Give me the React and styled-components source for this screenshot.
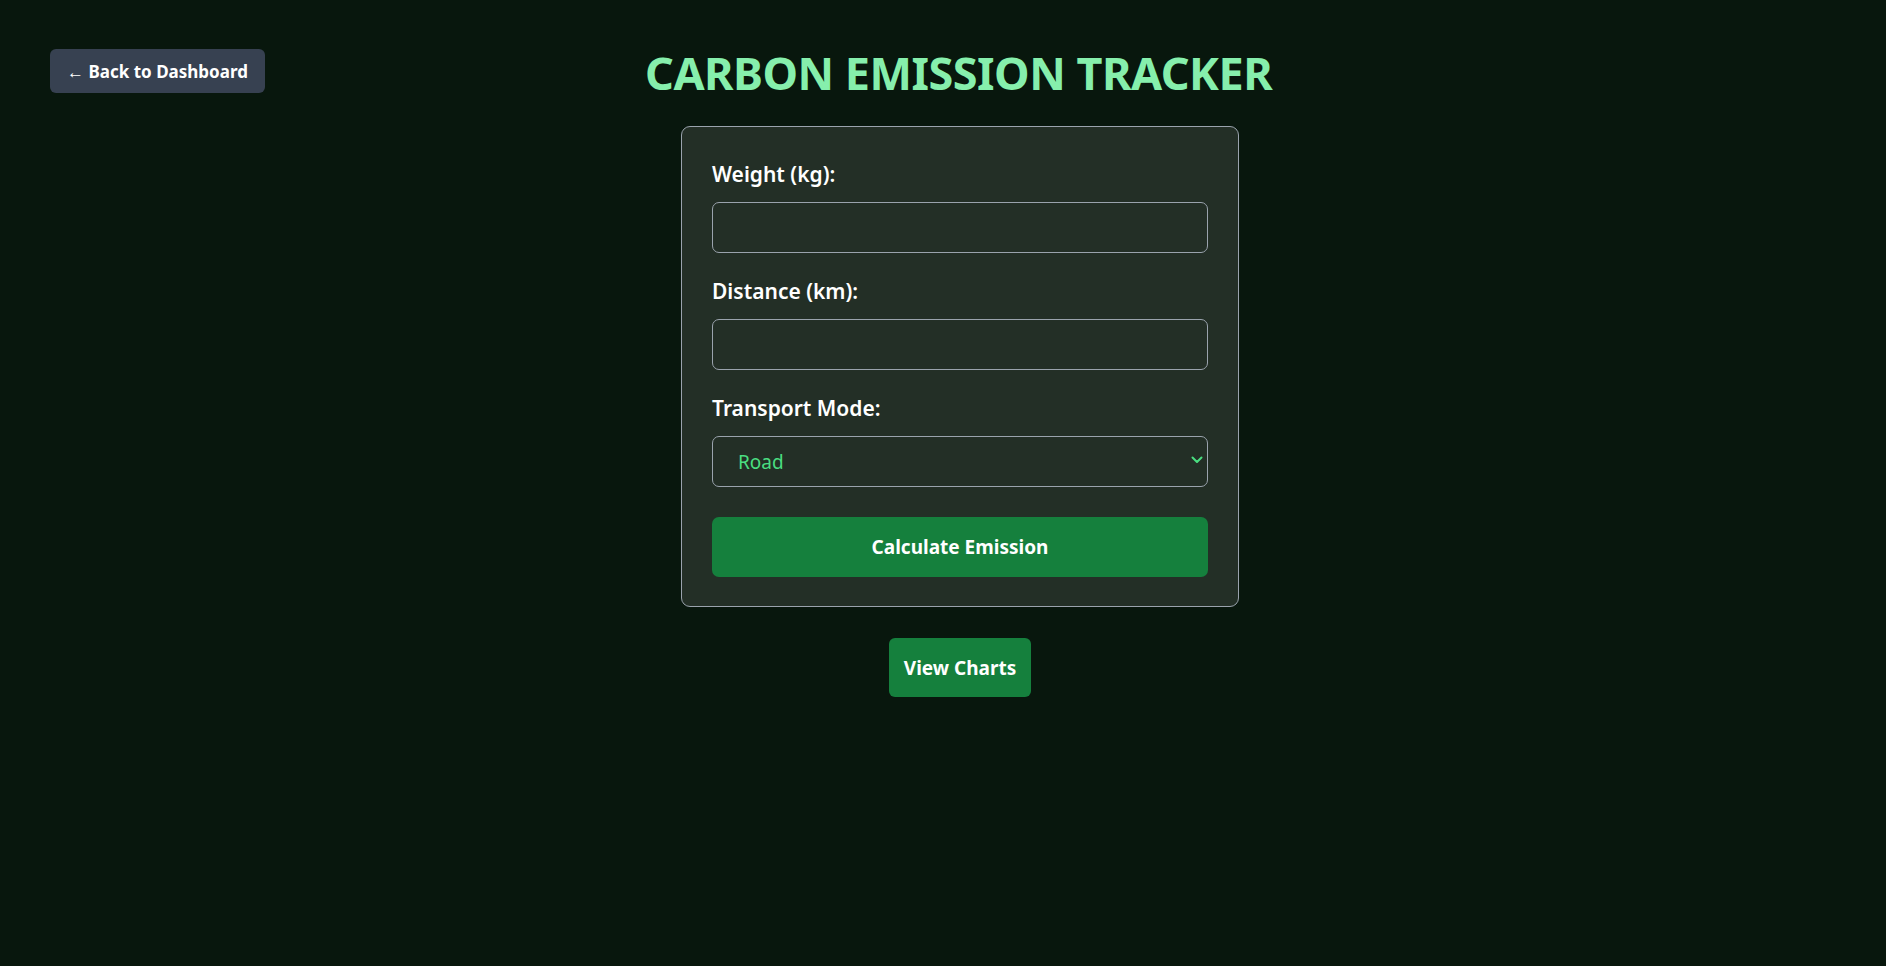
import styled, { createGlobalStyle } from 'styled-components';

const GlobalStyle = createGlobalStyle`
    html, body {
        margin: 0;
        padding: 0;
        background-color: #08170d;
    }
    body {
        font-family: "Noto Sans", "Open Sans", sans-serif;
        color: #ffffff;
    }
    * {
        box-sizing: border-box;
    }
`;

const Page = styled.div`
    min-height: 966px;
    width: 100%;
    background-color: #08170d;
    padding-top: 46px;
`;

const Header = styled.header`
    display: flex;
    flex-direction: row;
    align-items: flex-start;
    padding-left: 50px;
`;

const BackButton = styled.button`
    margin-top: 3px;
    height: 44px;
    width: 215px;
    padding: 0 16px;
    border: none;
    border-radius: 6px;
    background-color: #374151;
    color: #ffffff;
    font-family: inherit;
    font-size: 17px;
    font-weight: 700;
    cursor: pointer;
`;

const Title = styled.h1`
    margin: 0 0 0 380px;
    font-size: 45px;
    line-height: 54px;
    font-weight: 700;
    color: #86efac;
    letter-spacing: -0.5px;
`;

const Main = styled.main`
    display: flex;
    flex-direction: column;
    align-items: center;
    padding-left: 34px;
    margin-top: 26px;
`;

const Card = styled.form`
    width: 558px;
    padding: 32px 30px 29px 30px;
    background-color: #232f26;
    border: 1px solid #9aa3ad;
    border-radius: 9px;
`;

const Field = styled.div`
    display: flex;
    flex-direction: column;
    margin-bottom: 23px;
`;

const Label = styled.label`
    font-size: 21px;
    line-height: 30px;
    font-weight: 600;
    color: #ffffff;
    margin-bottom: 13px;
`;

const Input = styled.input`
    height: 51px;
    width: 100%;
    padding: 0 14px;
    background-color: #232f26;
    border: 1px solid #9aa3ad;
    border-radius: 7px;
    color: #ffffff;
    font-family: inherit;
    font-size: 20px;
    outline: none;
`;

const SelectWrap = styled.div`
    position: relative;
    width: 100%;
`;

const Select = styled.select`
    appearance: none;
    height: 51px;
    width: 100%;
    padding: 0 30px 0 25px;
    background-color: #232f26;
    border: 1px solid #9aa3ad;
    border-radius: 7px;
    color: #4ade80;
    font-family: inherit;
    font-size: 19px;
    outline: none;
`;

const Chevron = styled.svg`
    position: absolute;
    right: 5px;
    top: 20px;
    pointer-events: none;
`;

const PrimaryButton = styled.button`
    display: block;
    width: 100%;
    height: 60px;
    margin-top: 30px;
    border: none;
    border-radius: 7px;
    background-color: #15803d;
    color: #ffffff;
    font-family: inherit;
    font-size: 19px;
    font-weight: 700;
    cursor: pointer;
`;

const ChartsButton = styled.button`
    margin-top: 31px;
    height: 59px;
    width: 142px;
    border: none;
    border-radius: 6px;
    background-color: #15803d;
    color: #ffffff;
    font-family: inherit;
    font-size: 19px;
    font-weight: 700;
    cursor: pointer;
`;

export default function App() {
    return (
        <>
            <GlobalStyle />
            <Page>
                <Header>
                    <BackButton type="button">← Back to Dashboard</BackButton>
                    <Title>CARBON EMISSION TRACKER</Title>
                </Header>
                <Main>
                    <Card onSubmit={e => e.preventDefault()}>
                        <Field>
                            <Label htmlFor="weight">Weight (kg):</Label>
                            <Input id="weight" type="number" />
                        </Field>
                        <Field>
                            <Label htmlFor="distance">Distance (km):</Label>
                            <Input id="distance" type="number" />
                        </Field>
                        <Field>
                            <Label htmlFor="mode">Transport Mode:</Label>
                            <SelectWrap>
                                <Select id="mode" defaultValue="road">
                                    <option value="road">Road</option>
                                    <option value="rail">Rail</option>
                                    <option value="air">Air</option>
                                    <option value="sea">Sea</option>
                                </Select>
                                <Chevron width="12" height="8" viewBox="0 0 12 8" fill="none">
                                    <path d="M1.5 1.5 L6 6 L10.5 1.5" stroke="#4ade80" strokeWidth="2" strokeLinecap="round" strokeLinejoin="round" />
                                </Chevron>
                            </SelectWrap>
                        </Field>
                        <PrimaryButton type="submit">Calculate Emission</PrimaryButton>
                    </Card>
                    <ChartsButton type="button">View Charts</ChartsButton>
                </Main>
            </Page>
        </>
    );
}
